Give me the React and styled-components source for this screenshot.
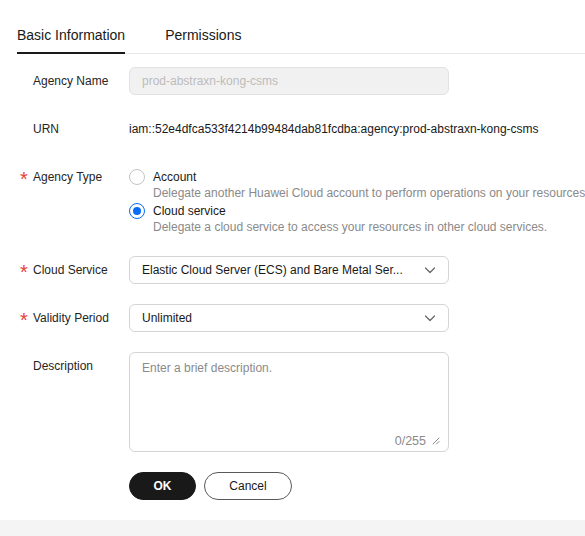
import React from 'react';
import styled, { createGlobalStyle } from 'styled-components';

const GlobalStyle = createGlobalStyle`
  html, body {
    margin: 0;
    padding: 0;
    background: #fff;
    overflow: hidden;
  }
  body {
    font-family: "Liberation Sans", Arial, sans-serif;
    color: #191919;
  }
`;

const Page = styled.div`
  width: 585px;
  height: 536px;
  display: flex;
  flex-direction: column;
`;

const TabBar = styled.div`
  display: flex;
  gap: 40px;
  margin-left: 17px;
  border-bottom: 1px solid #e8e8e8;
`;

const Tab = styled.div`
  padding: 26px 0 8px;
  line-height: 18px;
  font-size: 14px;
  color: #191919;
  font-weight: ${(p) => (p.$active ? 500 : 400)};
  border-bottom: 2px solid ${(p) => (p.$active ? '#191919' : 'transparent')};
  margin-bottom: -1px;
`;

const Form = styled.div`
  display: flex;
  flex-direction: column;
  gap: 20px;
  padding: 13px 0 0 20px;
`;

const Item = styled.div`
  display: flex;
  align-items: flex-start;
`;

const Label = styled.div`
  flex: none;
  width: 109px;
  display: flex;
  line-height: 28px;
  font-size: 12px;
  color: #252525;
`;

const Star = styled.span`
  width: 13px;
  flex: none;
  color: #e8403a;
  font-size: 20px;
  line-height: 28px;
  transform: translateY(2px);
`;

const Control = styled.div`
  flex: none;
  width: 320px;
`;

const Input = styled.div`
  box-sizing: border-box;
  height: 28px;
  display: flex;
  align-items: center;
  padding: 0 12px;
  border: 1px solid ${(p) => (p.$disabled ? '#e2e2e2' : '#d4d4d4')};
  border-radius: 6px;
  background: ${(p) => (p.$disabled ? '#f1f1f1' : '#fff')};
  color: ${(p) => (p.$disabled ? '#bcbcbc' : '#191919')};
  font-size: 12px;
`;

const SelectBox = styled(Input)`
  justify-content: space-between;
  gap: 12px;
`;

const SelectText = styled.span`
  white-space: nowrap;
  overflow: hidden;
  text-overflow: ellipsis;
`;

const Plain = styled.div`
  line-height: 28px;
  font-size: 12px;
  white-space: nowrap;
`;

const RadioGroup = styled.div`
  padding-top: 5px;
  font-size: 12px;
`;

const RadioRow = styled.div`
  display: flex;
  align-items: center;
  gap: 8px;
  height: 17px;
`;

const RadioDot = styled.span`
  box-sizing: border-box;
  width: 16px;
  height: 16px;
  flex: none;
  border-radius: 50%;
  border: 1px solid ${(p) => (p.$checked ? '#0a6cf5' : '#c4c4c4')};
  display: flex;
  align-items: center;
  justify-content: center;
  &::after {
    content: '';
    width: 8px;
    height: 8px;
    border-radius: 50%;
    background: ${(p) => (p.$checked ? '#0a6cf5' : 'transparent')};
  }
`;

const RadioHint = styled.div`
  padding-left: 24px;
  line-height: 17px;
  color: #8a8a8a;
  white-space: nowrap;
`;

const TextArea = styled.div`
  box-sizing: border-box;
  height: 100px;
  display: flex;
  flex-direction: column;
  padding: 7px 8px 2px 12px;
  border: 1px solid #d4d4d4;
  border-radius: 6px;
  font-size: 12px;
`;

const Placeholder = styled.div`
  flex: 1;
  color: #8a8a8a;
  line-height: 16px;
`;

const Counter = styled.div`
  display: flex;
  justify-content: flex-end;
  align-items: center;
  gap: 6px;
  color: #8a8a8a;
  font-size: 12.5px;
  line-height: 16px;
`;

const Actions = styled.div`
  display: flex;
  gap: 8px;
  padding-left: 109px;
`;

const Button = styled.button`
  box-sizing: border-box;
  height: 28px;
  min-width: ${(p) => (p.$primary ? '67px' : '88px')};
  padding: 0 20px;
  border-radius: 14px;
  border: 1px solid ${(p) => (p.$primary ? '#191919' : '#595959')};
  background: ${(p) => (p.$primary ? '#191919' : '#fff')};
  color: ${(p) => (p.$primary ? '#fff' : '#191919')};
  font-family: inherit;
  font-size: 12px;
  font-weight: ${(p) => (p.$primary ? 700 : 400)};
`;

const Band = styled.div`
  margin-top: 20px;
  flex: 1;
  background: #f4f4f4;
`;

const Chevron = () => (
  <svg width="12" height="12" viewBox="0 0 12 12" fill="none">
    <path d="M1.5 4 L6 8.5 L10.5 4" stroke="#666" strokeWidth="1.2" strokeLinecap="round" strokeLinejoin="round" />
  </svg>
);

const ResizeGrip = () => (
  <svg width="8" height="8" viewBox="0 0 8 8" fill="none">
    <path d="M1 7 L7 1 M4.5 7 L7 4.5" stroke="#8a8a8a" strokeWidth="1" strokeLinecap="round" />
  </svg>
);

const Field = ({ label, required, children }) => (
  <Item>
    <Label>
      <Star>{required ? '*' : ''}</Star>
      {label}
    </Label>
    <Control>{children}</Control>
  </Item>
);

const App = () => {
  return (
    <Page>
      <GlobalStyle />
      <TabBar>
        <Tab $active>Basic Information</Tab>
        <Tab>Permissions</Tab>
      </TabBar>
      <Form>
        <Field label="Agency Name">
          <Input $disabled>prod-abstraxn-kong-csms</Input>
        </Field>
        <Field label="URN">
          <Plain>iam::52e4dfca533f4214b99484dab81fcdba:agency:prod-abstraxn-kong-csms</Plain>
        </Field>
        <Field label="Agency Type" required>
          <RadioGroup>
            <RadioRow>
              <RadioDot />
              Account
            </RadioRow>
            <RadioHint>Delegate another Huawei Cloud account to perform operations on your resources.</RadioHint>
            <RadioRow>
              <RadioDot $checked />
              Cloud service
            </RadioRow>
            <RadioHint>Delegate a cloud service to access your resources in other cloud services.</RadioHint>
          </RadioGroup>
        </Field>
        <Field label="Cloud Service" required>
          <SelectBox>
            <SelectText>Elastic Cloud Server (ECS) and Bare Metal Ser...</SelectText>
            <Chevron />
          </SelectBox>
        </Field>
        <Field label="Validity Period" required>
          <SelectBox>
            <SelectText>Unlimited</SelectText>
            <Chevron />
          </SelectBox>
        </Field>
        <Field label="Description">
          <TextArea>
            <Placeholder>Enter a brief description.</Placeholder>
            <Counter>
              0/255
              <ResizeGrip />
            </Counter>
          </TextArea>
        </Field>
        <Actions>
          <Button $primary>OK</Button>
          <Button>Cancel</Button>
        </Actions>
      </Form>
      <Band />
    </Page>
  );
};

export default App;
